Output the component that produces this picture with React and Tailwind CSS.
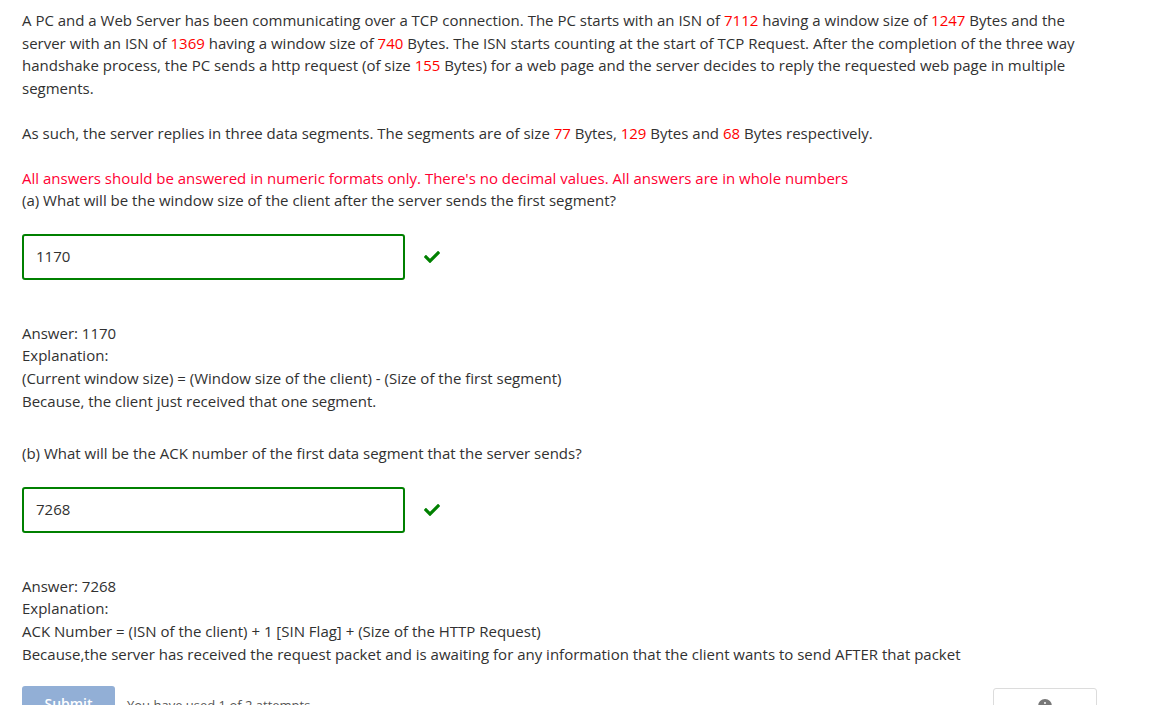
import React from 'react';

const Red = ({ children }) => <span className="text-[#ff0000]">{children}</span>;

function Check() {
  return (
    <svg viewBox="0 0 512 512" className="w-[16px] h-[16px] text-[#008000]" fill="currentColor">
      <path d="M173.9 439.4l-166.4-166.4c-10-10-10-26.2 0-36.2l36.2-36.2c10-10 26.2-10 36.2 0L192 312.7 432.1 72.6c10-10 26.2-10 36.2 0l36.2 36.2c10 10 10 26.2 0 36.2l-294.4 294.4c-10 10-26.2 10-36.2 0z" />
    </svg>
  );
}

function AnswerInput({ value }) {
  return (
    <div className="flex items-center gap-[19px]">
      <div className="w-[383px] h-[46px] border-2 border-[#008000] rounded-[3px] flex items-center px-[12px] text-[#313131]">
        {value}
      </div>
      <Check />
    </div>
  );
}

export default function App() {
  return (
    <div
      className="min-h-screen bg-white px-[22px] pt-[9px] text-[15px] leading-[22.6px] text-[#313131] overflow-hidden"
      style={{ fontFamily: '"Open Sans", "Noto Sans", sans-serif' }}
    >
      <p className="max-w-[1070px]">
        A PC and a Web Server has been communicating over a TCP connection. The PC starts with an ISN of <Red>7112</Red> having a window size of <Red>1247</Red> Bytes and the server with an ISN of <Red>1369</Red> having a window size of <Red>740</Red> Bytes. The ISN starts counting at the start of TCP Request. After the completion of the three way handshake process, the PC sends a http request (of size <Red>155</Red> Bytes) for a web page and the server decides to reply the requested web page in multiple segments.
      </p>
      <p className="mt-[22.6px]">
        As such, the server replies in three data segments. The segments are of size <Red>77</Red> Bytes, <Red>129</Red> Bytes and <Red>68</Red> Bytes respectively.
      </p>
      <p className="mt-[22px] text-[#ff0033]">
        All answers should be answered in numeric formats only. There's no decimal values. All answers are in whole numbers
      </p>
      <p>(a) What will be the window size of the client after the server sends the first segment?</p>

      <div className="mt-[22px]">
        <AnswerInput value="1170" />
      </div>

      <div className="mt-[42px]">
        <p>Answer: 1170</p>
        <p>Explanation:</p>
        <p>(Current window size) = (Window size of the client) - (Size of the first segment)</p>
        <p>Because, the client just received that one segment.</p>
      </div>

      <p className="mt-[30px]">(b) What will be the ACK number of the first data segment that the server sends?</p>

      <div className="mt-[22px]">
        <AnswerInput value="7268" />
      </div>

      <div className="mt-[42px]">
        <p>Answer: 7268</p>
        <p>Explanation:</p>
        <p>ACK Number = (ISN of the client) + 1 [SIN Flag] + (Size of the HTTP Request)</p>
        <p>Because,the server has received the request packet and is awaiting for any information that the client wants to send AFTER that packet</p>
      </div>

      <div className="mt-[21px] flex items-start">
        <button className="w-[93px] h-[36px] bg-[#92afd6] text-white font-semibold rounded-[3px] text-[14px]">
          Submit
        </button>
        <span className="ml-[12px] mt-[8px] text-[13px] text-[#555]">You have used 1 of 2 attempts</span>
        <div className="ml-auto mr-[49px] mt-[2px] w-[104px] h-[36px] border border-[#dcdcdc] rounded-[3px] flex justify-center pt-[10px]">
          <svg viewBox="0 0 16 16" className="w-[14px] h-[14px] text-[#777]" fill="currentColor">
            <circle cx="8" cy="8" r="8" />
            <rect x="7" y="7" width="2" height="5" fill="#fff" />
            <circle cx="8" cy="4.5" r="1.1" fill="#fff" />
          </svg>
        </div>
      </div>
    </div>
  );
}
